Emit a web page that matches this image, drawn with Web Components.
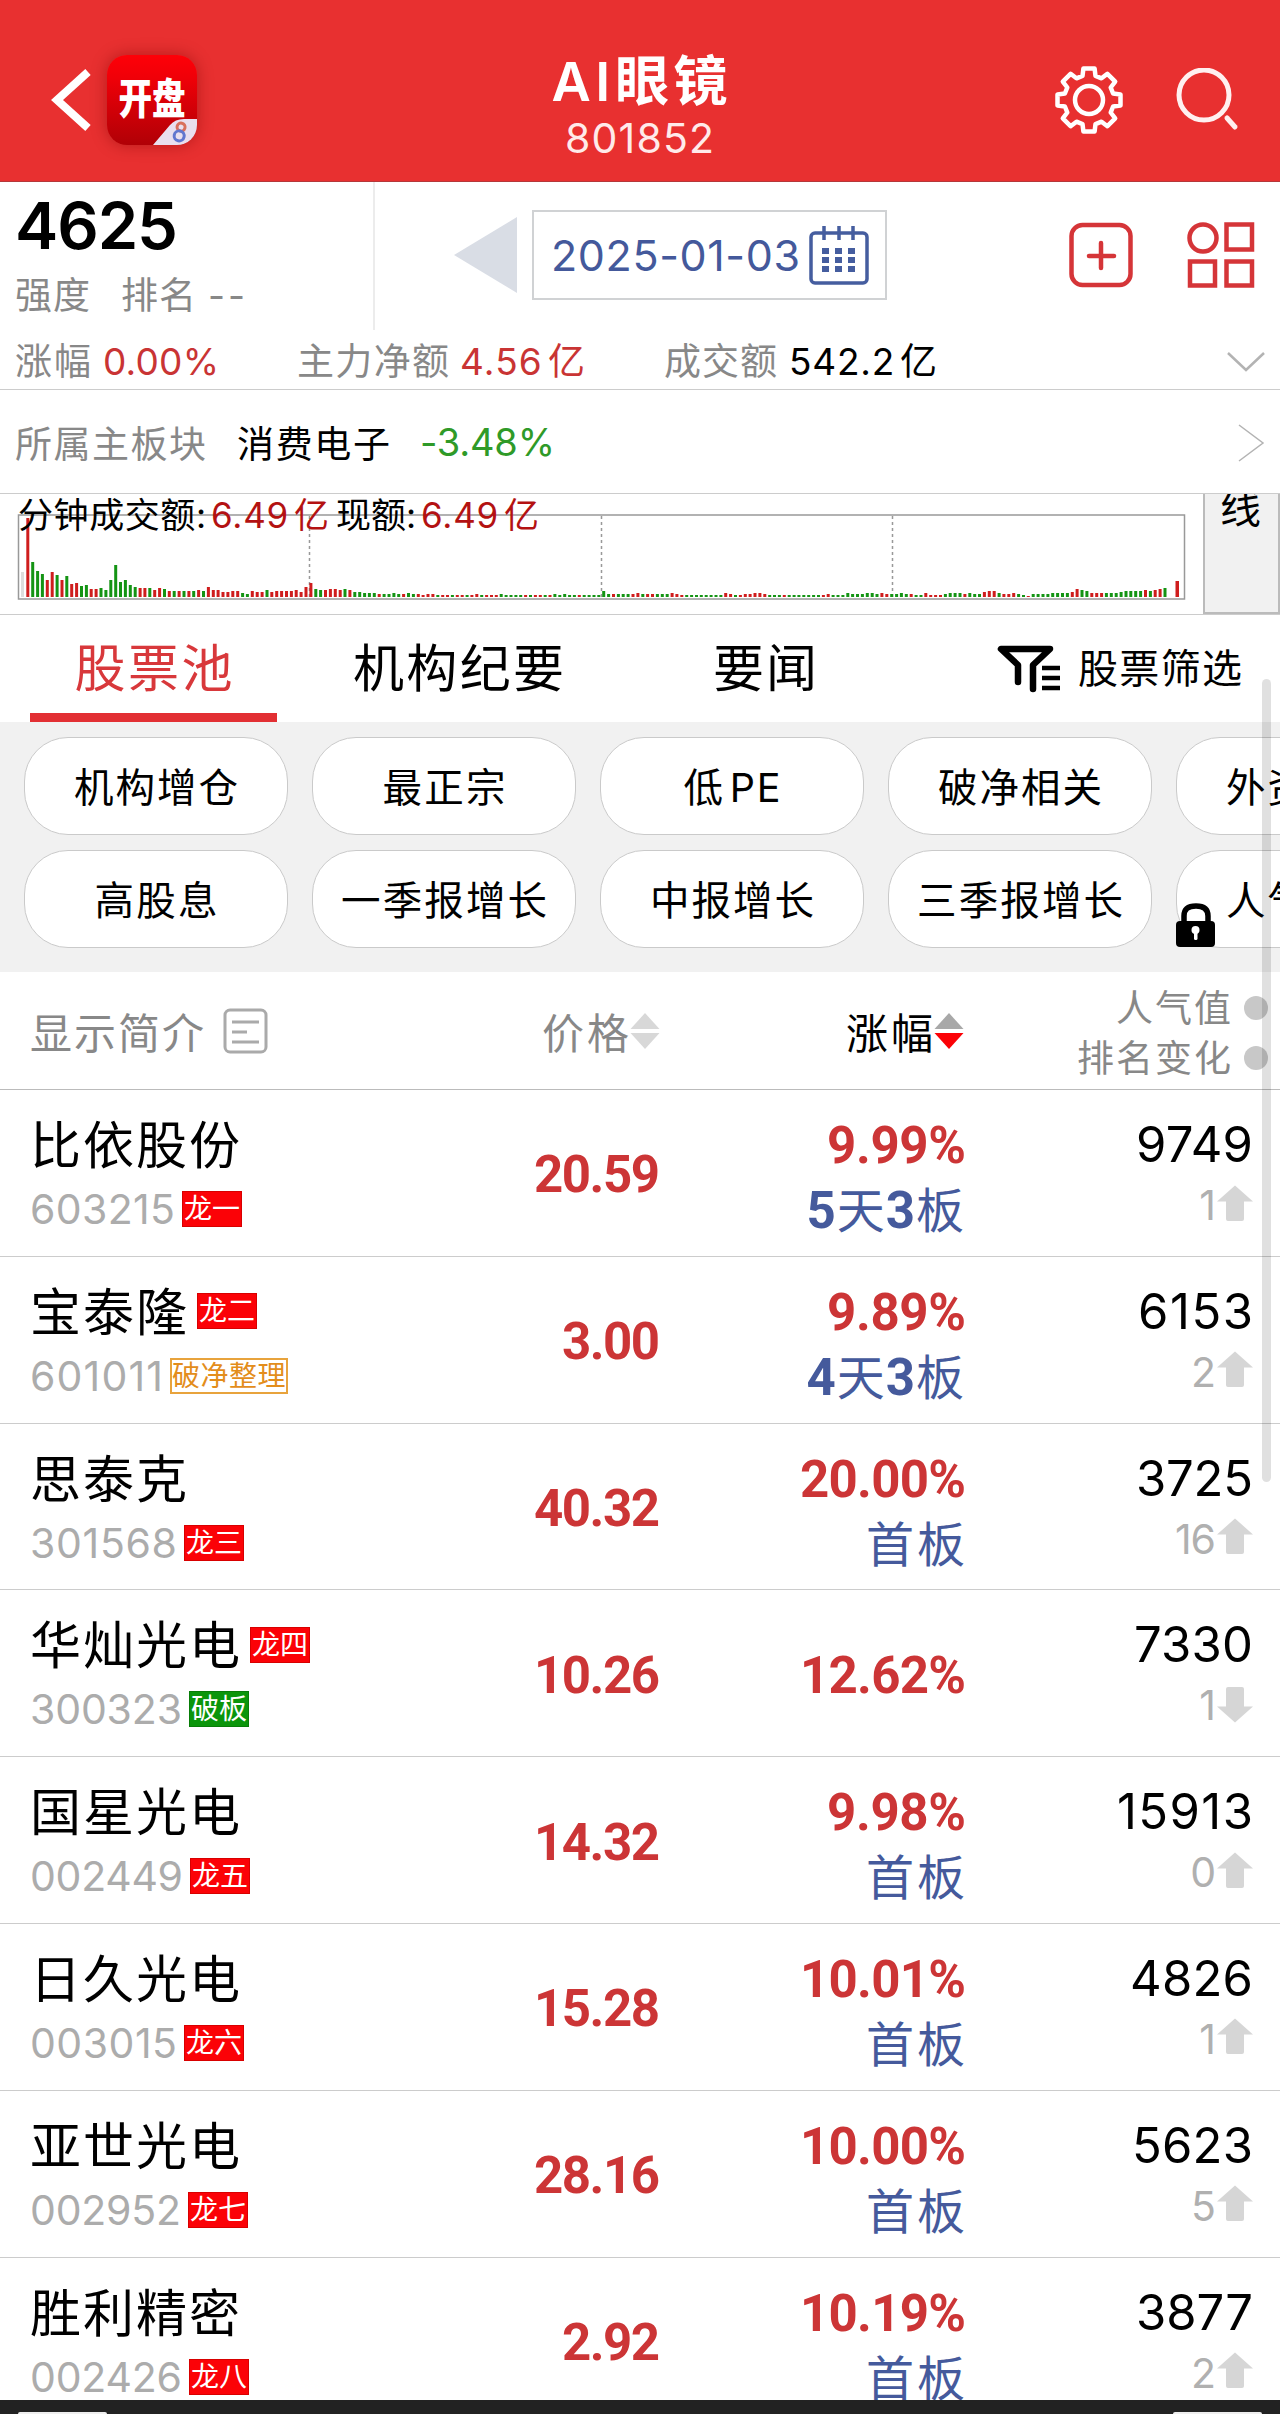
<!DOCTYPE html>
<html lang="zh-CN">
<head>
<meta charset="UTF-8">
<title>AI眼镜 801852</title>
<style>
  body {
    margin: 0;
    width: 1280px;
    height: 2414px;
    overflow: hidden;
    background: #fff;
    color: #000;
    font-family: Inter, "Noto Sans CJK SC", sans-serif;
  }
</style>
</head>
<body>
<stock-page></stock-page>

<script>
// Text run that is spread over a fixed width with letter-spacing
class FitText extends HTMLElement {
  constructor() {
    super();
    this.attachShadow({ mode: "open" });
  }

  connectedCallback() {
    this.shadowRoot.innerHTML = `
      <style>
        :host { display: inline-block; white-space: nowrap; flex: none; }
        span { display: inline-block; vertical-align: top; }
        ::slotted(i) { font-style: normal; margin-left: 5px; }
      </style>
      <span><slot></slot></span>
    `;
    const width = Number(this.getAttribute("w"));
    const span = this.shadowRoot.querySelector("span");
    const gaps = Math.max(1, this.textContent.length - 1);
    const natural = span.getBoundingClientRect().width;
    span.style.letterSpacing = (width - natural) / gaps + "px";
    this.style.width = width + "px";
  }
}

class AppLogo extends HTMLElement {
  constructor() {
    super();
    this.attachShadow({ mode: "open" });
  }

  connectedCallback() {
    this.shadowRoot.innerHTML = `
      <style>
        :host {
          display: block;
          position: relative;
          width: 90px;
          height: 90px;
          border-radius: 20px;
          overflow: hidden;
          background: linear-gradient(#fe0008, #f00008 25%, #b00006);
        }
        .name {
          width: 90px;
          height: 88px;
          line-height: 88px;
          text-align: center;
          font-weight: 900;
          font-size: 42px;
          color: #fff;
          transform: scaleX(0.8);
          white-space: nowrap;
        }
        svg { position: absolute; right: 0; bottom: 0; }
      </style>
      <div class="name">开盘</div>
      <svg width="44" height="26" viewBox="0 0 44 26">
        <path d="M0 26 L17 6 Q22 0 31 0 H44 V26 Z" fill="#e9dfee"/>
        <g fill="none" stroke-width="3" transform="rotate(12 27 13)">
          <circle cx="27" cy="8" r="4" stroke="#d9705c"/>
          <circle cx="27" cy="17" r="5" stroke="#6277cf"/>
        </g>
      </svg>
    `;
  }
}

class AppHeader extends HTMLElement {
  constructor() {
    super();
    this.attachShadow({ mode: "open" });
  }

  connectedCallback() {
    this.shadowRoot.innerHTML = `
      <style>
        :host {
          display: flex;
          justify-content: space-between;
          box-sizing: border-box;
          height: 182px;
          padding: 55px 41px 0 50px;
          background: #e83030;
          border-bottom: 1px solid #b5383a;
          color: #fff;
        }
        .left, .right { display: flex; align-items: center; height: 90px; width: 240px; }
        .left { gap: 15px; }
        app-logo { box-shadow: 0 0 16px rgba(120, 0, 0, 0.45); }
        .right { justify-content: flex-end; gap: 51px; }
        .title { display: flex; flex-direction: column; align-items: center; margin-right: 10px; }
        h1 { margin: 0; font-size: 54px; font-weight: 600; line-height: 54px; height: 54px; }
        .code { font-size: 41px; line-height: 42px; margin-top: 8px; color: #ffeaea; }
      </style>
      <div class="left">
        <svg width="42" height="64" viewBox="0 0 42 64"><path d="M38 4 L7 32 L38 60" fill="none" stroke="#fff" stroke-width="8"/></svg>
        <app-logo></app-logo>
      </div>
      <div class="title">
        <h1><fit-text w="176">AI眼镜</fit-text></h1>
        <fit-text class="code" w="149">801852</fit-text>
      </div>
      <div class="right">
        <svg width="70" height="70" viewBox="-35 -35 70 70" fill="none" stroke="#fff" stroke-width="4.5" stroke-linejoin="round">
          <path id="gear"/>
          <circle r="14"/>
        </svg>
        <svg width="64" height="64" viewBox="0 0 64 64" fill="none" stroke="#fff0f0" stroke-width="5" stroke-linecap="round">
          <circle cx="29" cy="27" r="25"/>
          <path d="M52 50 L60 59"/>
        </svg>
      </div>
    `;
    this.shadowRoot.querySelector("#gear").setAttribute("d", this.gearPath());
  }

  // eight teeth: narrow tip, wider root
  gearPath() {
    const points = [];
    for (let i = 0; i < 8; i++) {
      [[-15, 25], [-10, 32], [10, 32], [15, 25]].forEach(([deg, r]) => {
        const a = (i * 45 + deg - 90) * Math.PI / 180;
        points.push((r * Math.cos(a)).toFixed(1) + " " + (r * Math.sin(a)).toFixed(1));
      });
    }
    return "M" + points.join(" L") + " Z";
  }
}

class BoardSummary extends HTMLElement {
  constructor() {
    super();
    this.attachShadow({ mode: "open" });
  }

  connectedCallback() {
    this.shadowRoot.innerHTML = `
      <style>
        :host { display: block; height: 207px; border-bottom: 1px solid #ccc; color: #888; font-size: 37px; }
        .top { display: flex; height: 148px; }
        .score { box-sizing: border-box; width: 375px; border-right: 2px solid #ececec; padding: 13px 0 0 15px; }
        .value { display: block; font-size: 65px; font-weight: 600; line-height: 62px; color: #000; }
        .rank { display: flex; line-height: 44px; margin-top: 17px; }
        .rank fit-text:nth-child(2) { margin-left: 31px; }
        .rank fit-text:nth-child(3) { margin-left: 12px; }
        .tools { display: flex; flex: 1; align-items: center; height: 90px; padding: 28px 25px 0 79px; }
        .date {
          display: flex;
          align-items: center;
          box-sizing: border-box;
          width: 355px;
          height: 90px;
          margin: 0 182px 0 15px;
          padding-left: 17px;
          border: 2px solid #d0d2d4;
          color: #44599b;
          font-size: 43px;
        }
        .date svg { margin-left: 9px; }
        .stats { display: flex; align-items: center; height: 59px; line-height: 46px; padding: 4px 15px 0 15px; box-sizing: border-box; }
        .red { color: #c93434; }
        .black { color: #000; }
      </style>
      <div class="top">
        <div class="score">
          <fit-text class="value" w="163">4625</fit-text>
          <div class="rank"><fit-text w="75">强度</fit-text><fit-text w="75">排名</fit-text><fit-text w="37">--</fit-text></div>
        </div>
        <div class="tools">
          <svg width="63" height="76" viewBox="0 0 63 76"><path d="M0 38 L63 0 V76 Z" fill="#d9dde5"/></svg>
          <div class="date">
            <fit-text w="249">2025-01-03</fit-text>
            <svg width="60" height="60" viewBox="0 0 60 60" fill="none" stroke="#455d9f" stroke-width="3.5">
              <rect x="2" y="8" width="56" height="50" rx="4"/>
              <path d="M15 1 V15 M30 1 V15 M44 1 V15"/>
              <path d="M13 26 H46 M13 35 H46 M13 44 H46" stroke-width="6" stroke-dasharray="7 6"/>
            </svg>
          </div>
          <svg width="64" height="66" viewBox="0 0 64 66" fill="none" stroke="#d53538" stroke-width="4.5">
            <rect x="2.5" y="3" width="59" height="60" rx="11"/>
            <path d="M32 21 V46 M20 34 H45" stroke-linecap="round"/>
          </svg>
          <svg style="margin-left:54px" width="68" height="66" viewBox="0 0 68 66" fill="none" stroke="#d53538" stroke-width="4.5">
            <circle cx="16" cy="16" r="13.5"/>
            <rect x="39.5" y="2.5" width="25.5" height="25"/>
            <rect x="3" y="39.5" width="25" height="24"/>
            <rect x="39.5" y="39.5" width="25.5" height="24"/>
          </svg>
        </div>
      </div>
      <div class="stats">
        <fit-text w="76">涨幅</fit-text>
        <fit-text class="red" w="116" style="margin-left:12px">0.00%</fit-text>
        <fit-text w="152" style="margin-left:78px">主力净额</fit-text>
        <fit-text class="red" w="125" style="margin-left:11px">4.56<i>亿</i></fit-text>
        <fit-text w="113" style="margin-left:79px">成交额</fit-text>
        <fit-text class="black" w="148" style="margin-left:12px">542.2<i>亿</i></fit-text>
        <svg style="margin-left:auto" width="38" height="22" viewBox="0 0 38 22"><path d="M1 2 L19 19 L37 2" fill="none" stroke="#b3b3b3" stroke-width="2.5"/></svg>
      </div>
    `;
  }
}

class SectorRow extends HTMLElement {
  constructor() {
    super();
    this.attachShadow({ mode: "open" });
  }

  connectedCallback() {
    this.shadowRoot.innerHTML = `
      <style>
        :host {
          display: flex;
          align-items: center;
          height: 103px;
          padding: 0 15px 0 15px;
          border-bottom: 1px solid #ccc;
          font-size: 37px;
        }
        .label { color: #888; }
        .name { margin-left: 31px; }
        .rate { margin-left: 30px; color: #2f9a28; font-size: 38px; }
        svg { margin-left: auto; margin-top: 2px; }
      </style>
      <fit-text class="label" w="191">所属主板块</fit-text>
      <fit-text class="name" w="153">消费电子</fit-text>
      <fit-text class="rate" w="135">-3.48%</fit-text>
      <svg width="27" height="38" viewBox="0 0 27 38"><path d="M1 1 L25 19 L1 37" fill="none" stroke="#b3b3b3" stroke-width="1.5"/></svg>
    `;
  }
}

const VOLUMES = `
  r79 g35 g26 g23 r17 r25 g22 r17 g21 r13 r14 g11 g12 r8x2 g9 g7 g17 g32 g15 g17 g12 g10 r9x2 g9 r7 r9 g8
  r6 g6 r6 g6 r6 g6 r7 g6 r10 r7x2 r5x2 r6x2 g4 g3 r6 r5x2 g7 r5 r6x4 r7 r5 r10 r14 g8 g7 r7 r8x2 r7 g8 r7
  g5x2 g4x3 r3 g3x2 g4 g3 r3 g4 g3 r3 r2 r3x2 g2 r2x2 g2 r2x2 g2 r2 r3 g2 r2x3 g3 g2x4 r2 g2 r2x2 g2 r2 g3
  g2 g3 g2x2 r2 g2x4 g6 g3 r3 g3 g3 g3 r3 r4 g3 r3x2 g3x3 r4 r3 r2 g2x8 r4 r3 g2 r2 r3x2 r4x2 r3 g2x3 r2
  g2x7 r2 r3 g2x3 g4 g3x3 g4x2 g3 r4 r3 g3x2 g4 g3 r3 g2x2 r4 r2x3 g3 g4x3 r3 g4 g3x2 r5 r6x2 g4 r3x2 r4
  g3 g2 r1 g3x4 g4x4 r5 r8 g7 g6 r4x3 g4x3 g5 g6x4 r7 g6 r7 r8 g9`;

class VolumeChart extends HTMLElement {
  constructor() {
    super();
    this.attachShadow({ mode: "open" });
  }

  connectedCallback() {
    this.shadowRoot.innerHTML = `
      <style>
        :host { display: flex; justify-content: space-between; height: 120px; border-bottom: 1px solid #ccc; }
        .chart { position: relative; width: 1190px; }
        .chart svg { display: block; }
        .legend {
          position: absolute;
          left: 18px;
          top: 1px;
          display: flex;
          font-size: 35px;
          line-height: 41px;
        }
        .red { color: #b31212; margin: 0 7px 0 5px; }
        .period {
          box-sizing: border-box;
          width: 77px;
          overflow: hidden;
          background: #f1f1f1;
          border: 2px solid #bbb;
          border-top: 0;
          text-align: center;
          font-size: 41px;
          line-height: 48px;
        }
        .period span { display: block; margin: -10px 0 0 -2px; }
      </style>
      <div class="chart">
        <svg width="1190" height="120" viewBox="0 0 1190 120">
          <g fill="none" stroke="#999">
            <rect x="18.5" y="21" width="1166" height="84" stroke-width="1.5"/>
            <path d="M309.5 22 V104 M601.5 22 V104 M892.5 22 V104" stroke-width="1.5" stroke-dasharray="3 3"/>
          </g>
          <rect x="21" y="78" width="3" height="25" fill="#ddd"/>
          ${this.bars()}
          <rect x="1175.5" y="87" width="3.5" height="16" fill="#cf1d1d"/>
        </svg>
        <div class="legend">
          <fit-text w="188">分钟成交额:</fit-text>
          <fit-text class="red" w="118">6.49<i>亿</i></fit-text>
          <fit-text w="80">现额:</fit-text>
          <fit-text class="red" w="118">6.49<i>亿</i></fit-text>
        </div>
      </div>
      <div class="period"><span>线</span></div>
    `;
  }

  bars() {
    const list = [];
    for (const [, color, size, count] of VOLUMES.matchAll(/([rg])(\d+)(?:x(\d+))?/g)) {
      for (let i = 0; i < Number(count || 1); i++) list.push([color, Number(size)]);
    }
    const step = (1165 - 27.8) / (list.length - 1);
    return list.map(([color, size], i) => {
      const x = (27.8 + i * step - 1.5).toFixed(1);
      return `<rect x="${x}" y="${103 - size}" width="3" height="${size}" fill="${color === "r" ? "#cf1d1d" : "#149414"}"/>`;
    }).join("");
  }
}

class TabBar extends HTMLElement {
  constructor() {
    super();
    this.attachShadow({ mode: "open" });
  }

  connectedCallback() {
    this.shadowRoot.innerHTML = `
      <style>
        :host { display: flex; align-items: stretch; height: 107px; padding-left: 30px; font-size: 51px; line-height: 107px; }
        .tab { text-align: center; box-sizing: border-box; height: 107px; line-height: 107px; }
        .active { width: 247px; color: #d8383b; border-bottom: 9px solid #e22f33; }
        .filter { display: flex; align-items: center; font-size: 40px; margin-left: 180px; }
        .filter fit-text { margin-left: 17px; }
      </style>
      <div class="tab active"><fit-text w="158">股票池</fit-text></div>
      <fit-text class="tab" style="margin-left:76px" w="211">机构纪要</fit-text>
      <fit-text class="tab" style="margin-left:149px" w="104">要闻</fit-text>
      <div class="filter">
        <svg width="64" height="48" viewBox="0 0 64 48" fill="none" stroke="#000" stroke-width="6.5" stroke-linecap="round" stroke-linejoin="round">
          <path d="M21 37 V20 L4 4 H53 L36 20 V44"/>
          <path d="M45 23 H63 M45 33 H63 M45 43 H63" stroke-width="4.5" stroke-linecap="butt"/>
        </svg>
        <fit-text w="164">股票筛选</fit-text>
      </div>
    `;
  }
}

class FilterChip extends HTMLElement {
  constructor() {
    super();
    this.attachShadow({ mode: "open" });
  }

  connectedCallback() {
    const lock = this.hasAttribute("locked") ? `
      <svg width="40" height="45" viewBox="0 0 40 45">
        <path d="M8 20 V13 Q8 3 20 3 Q32 3 32 13 V20" fill="none" stroke="#000" stroke-width="5.5"/>
        <rect y="18" width="39" height="26" rx="4"/>
        <circle cx="19.5" cy="27" r="4" fill="#fff"/>
        <rect x="18" y="28" width="3.5" height="9" rx="1.5" fill="#fff"/>
      </svg>` : "";
    this.shadowRoot.innerHTML = `
      <style>
        :host {
          display: flex;
          justify-content: center;
          align-items: center;
          position: relative;
          box-sizing: border-box;
          width: 264px;
          height: 98px;
          padding-bottom: 4px;
          border: 1.5px solid #cacaca;
          border-radius: 44px;
          background: #fff;
          font-size: 39.5px;
        }
        svg { position: absolute; left: -1px; bottom: -1px; }
      </style>
      <slot></slot>${lock}
    `;
  }
}

class FilterChips extends HTMLElement {
  constructor() {
    super();
    this.attachShadow({ mode: "open" });
  }

  connectedCallback() {
    this.shadowRoot.innerHTML = `
      <style>
        :host {
          display: grid;
          grid-template-columns: repeat(5, 264px);
          gap: 15px 24px;
          align-content: start;
          box-sizing: border-box;
          height: 250px;
          padding: 15px 0 0 24px;
          background: #f1f1f1;
          overflow: hidden;
        }
      </style>
      <filter-chip><fit-text w="164">机构增仓</fit-text></filter-chip>
      <filter-chip><fit-text w="123">最正宗</fit-text></filter-chip>
      <filter-chip><fit-text w="97">低<i>PE</i></fit-text></filter-chip>
      <filter-chip><fit-text w="164">破净相关</fit-text></filter-chip>
      <filter-chip><fit-text w="164">外资增仓</fit-text></filter-chip>
      <filter-chip><fit-text w="123">高股息</fit-text></filter-chip>
      <filter-chip><fit-text w="206">一季报增长</fit-text></filter-chip>
      <filter-chip><fit-text w="164">中报增长</fit-text></filter-chip>
      <filter-chip><fit-text w="206">三季报增长</fit-text></filter-chip>
      <filter-chip locked><fit-text w="164">人气排名</fit-text></filter-chip>
    `;
  }
}

class StockHead extends HTMLElement {
  constructor() {
    super();
    this.attachShadow({ mode: "open" });
  }

  connectedCallback() {
    this.shadowRoot.innerHTML = `
      <style>
        :host {
          display: grid;
          grid-template-columns: 268px 392px 304px 304px;
          align-items: center;
          height: 117px;
          border-bottom: 1.5px solid #bbb;
          color: #888;
          font-size: 42px;
        }
        .cell { display: flex; align-items: center; justify-content: flex-end; }
        .sort { margin-left: 1px; margin-top: 1px; }
        .dark { color: #000; }
        .intro svg { margin-left: 19px; }
        .rank { display: grid; gap: 5px; font-size: 37px; line-height: 45px; padding-top: 5px; }
        .rank div { display: flex; align-items: center; justify-content: flex-end; gap: 13px; }
        i { width: 24px; height: 24px; border-radius: 50%; background: #c8c8c8; }
      </style>
      <div class="cell intro">
        <fit-text w="174">显示简介</fit-text>
        <svg width="45" height="46" viewBox="0 0 45 46" fill="none" stroke="#aaa" stroke-width="3">
          <rect x="2" y="2" width="41" height="42" rx="5"/>
          <path d="M9 14 H36 M9 24 H24 M9 34 H36"/>
        </svg>
      </div>
      <div class="cell"><fit-text w="87">价格</fit-text>${this.sortIcon("#d8d8d8", "#d8d8d8")}</div>
      <div class="cell dark"><fit-text w="87">涨幅</fit-text>${this.sortIcon("#a8a8a8", "#fb0207")}</div>
      <div class="rank">
        <div><fit-text w="115">人气值</fit-text><i></i></div>
        <div><fit-text w="154">排名变化</fit-text><i></i></div>
      </div>
    `;
  }

  sortIcon(up, down) {
    return `<svg class="sort" width="30" height="36" viewBox="0 0 30 36">
      <path d="M15 0 L29.5 16 H0.5 Z" fill="${up}"/>
      <path d="M15 36 L29.5 20 H0.5 Z" fill="${down}"/>
    </svg>`;
  }
}

class StockTag extends HTMLElement {
  constructor() {
    super();
    this.attachShadow({ mode: "open" });
  }

  connectedCallback() {
    this.shadowRoot.innerHTML = `
      <style>
        :host {
          display: block;
          box-sizing: border-box;
          flex: none;
          height: 36px;
          padding: 0 1px;
          border: 1px solid #d80000;
          background: #fb0207;
          color: #fff;
          font-size: 28px;
          line-height: 35px;
        }
        :host([kind="green"]) { background: #0b950b; border-color: #087d08; }
        :host([kind="line"]) {
          background: #fff;
          border: 2px solid #e8a33c;
          color: #e38d1b;
          line-height: 33px;
          letter-spacing: 0.5px;
          padding: 0;
        }
      </style>
      <slot></slot>
    `;
  }
}

class StockRow extends HTMLElement {
  constructor() {
    super();
    this.attachShadow({ mode: "open" });
  }

  set data(row) {
    const nameTag = row.nameTag ? `<stock-tag>${row.nameTag}</stock-tag>` : "";
    const board = row.board ? `<div class="board">${this.boardText(row.board)}</div>` : "";
    this.shadowRoot.innerHTML = `
      <style>
        :host {
          display: grid;
          grid-template-columns: 400px 260px 306px 287px;
          box-sizing: border-box;
          height: 166.8px;
          border-bottom: 1.5px solid #ccc;
        }
        .name, .code { display: flex; align-items: center; padding-left: 30px; }
        .name { margin-top: 23px; height: 58px; gap: 10px; font-size: 51px; }
        .name stock-tag { margin-top: 5px; }
        .code { margin-top: 19px; height: 38px; gap: 7px; font-size: 41px; color: #acacac; }
        .price, .change { display: flex; flex-direction: column; align-items: flex-end; justify-content: center; padding-top: 5px; }
        .price, .rate { font-family: Roboto, sans-serif; font-weight: 700; font-size: 51px; line-height: 56px; color: #cc3536; }
        .change.two { justify-content: flex-start; padding-top: 28px; }
        .board { display: flex; align-items: center; margin: 9px 1px 0 0; height: 56px; color: #455a9c; font-size: 48px; line-height: 56px; }
        .board b { font-family: Roboto, sans-serif; font-size: 51px; }
        .board fit-text { margin-left: 1px; }
        .hot { display: flex; flex-direction: column; align-items: flex-end; padding-top: 28px; }
        .hot .value { font-size: 49px; line-height: 54px; }
        .move { display: flex; align-items: center; margin-top: 14px; height: 38px; font-size: 41px; line-height: 38px; letter-spacing: -1px; color: #b0b0b0; gap: 2px; }
        .move svg { margin-top: -5px; }
        .move svg.down { transform: scaleY(-1); margin-top: -1px; }
      </style>
      <div>
        <div class="name"><fit-text w="${row.name.length * 53 - 2}">${row.name}</fit-text>${nameTag}</div>
        <div class="code"><fit-text w="${row.codeWidth}">${row.code}</fit-text><stock-tag kind="${row.kind || "red"}">${row.tag}</stock-tag></div>
      </div>
      <div class="price"><fit-text w="${row.price.length === 5 ? 126 : 98}">${row.price}</fit-text></div>
      <div class="change ${row.board ? "two" : ""}">
        <fit-text class="rate" w="${row.rate.length === 6 ? 166 : 139}">${row.rate}</fit-text>
        ${board}
      </div>
      <div class="hot">
        <fit-text class="value" w="${row.hotWidth}">${row.hot}</fit-text>
        <div class="move">${row.move}<svg class="${row.down ? "down" : ""}" width="36" height="36" viewBox="0 0 36 36"><path d="M18 0.5 L36 16.5 H27 V34 Q27 36 25 36 H11 Q9 36 9 34 V16.5 H0 Z" fill="#d6d6d6"/></svg></div>
      </div>
    `;
  }

  // digits of the board count are bold, the characters are regular
  boardText(text) {
    return text.replace(/\d|\D+/g, (part) =>
      /\d/.test(part) ? `<b>${part}</b>` : `<fit-text w="${part.length * 50 - 1}">${part}</fit-text>`);
  }
}

const STOCKS = [
  { name: "比依股份", code: "603215", codeWidth: 145, tag: "龙一", price: "20.59", rate: "9.99%", board: "5天3板", hot: "9749", hotWidth: 117, move: "1" },
  { name: "宝泰隆", nameTag: "龙二", code: "601011", codeWidth: 133, tag: "破净整理", kind: "line", price: "3.00", rate: "9.89%", board: "4天3板", hot: "6153", hotWidth: 115, move: "2" },
  { name: "思泰克", code: "301568", codeWidth: 147, tag: "龙三", price: "40.32", rate: "20.00%", board: "首板", hot: "3725", hotWidth: 117, move: "16" },
  { name: "华灿光电", nameTag: "龙四", code: "300323", codeWidth: 152, tag: "破板", kind: "green", price: "10.26", rate: "12.62%", hot: "7330", hotWidth: 119, move: "1", down: true },
  { name: "国星光电", code: "002449", codeWidth: 153, tag: "龙五", price: "14.32", rate: "9.98%", board: "首板", hot: "15913", hotWidth: 136, move: "0" },
  { name: "日久光电", code: "003015", codeWidth: 147, tag: "龙六", price: "15.28", rate: "10.01%", board: "首板", hot: "4826", hotWidth: 123, move: "1" },
  { name: "亚世光电", code: "002952", codeWidth: 151, tag: "龙七", price: "28.16", rate: "10.00%", board: "首板", hot: "5623", hotWidth: 121, move: "5" },
  { name: "胜利精密", code: "002426", codeWidth: 152, tag: "龙八", price: "2.92", rate: "10.19%", board: "首板", hot: "3877", hotWidth: 117, move: "2" },
];

class StockPage extends HTMLElement {
  constructor() {
    super();
    this.attachShadow({ mode: "open" });
  }

  connectedCallback() {
    this.shadowRoot.innerHTML = `
      <style>
        :host { display: flex; flex-direction: column; position: relative; width: 1280px; height: 2414px; overflow: hidden; }
        .list { flex: 1; min-height: 0; overflow: hidden; }
        .scrollbar {
          position: absolute;
          left: 1262px;
          top: 679px;
          width: 9px;
          height: 803px;
          border-radius: 5px;
          background: rgba(0, 0, 0, 0.12);
        }
        footer { display: flex; justify-content: space-between; align-items: flex-end; height: 14px; padding: 0 18px; background: #222; }
        footer i { width: 89px; height: 2px; border-radius: 3px 3px 0 0; background: #eee; }
      </style>
      <app-header></app-header>
      <board-summary></board-summary>
      <sector-row></sector-row>
      <volume-chart></volume-chart>
      <tab-bar></tab-bar>
      <filter-chips></filter-chips>
      <stock-head></stock-head>
      <div class="list"></div>
      <footer><i></i><i></i></footer>
      <div class="scrollbar"></div>
    `;
    const list = this.shadowRoot.querySelector(".list");
    STOCKS.forEach((stock) => {
      const row = document.createElement("stock-row");
      list.appendChild(row);
      row.data = stock;
    });
  }
}

customElements.define("fit-text", FitText);
customElements.define("app-logo", AppLogo);
customElements.define("app-header", AppHeader);
customElements.define("board-summary", BoardSummary);
customElements.define("sector-row", SectorRow);
customElements.define("volume-chart", VolumeChart);
customElements.define("tab-bar", TabBar);
customElements.define("filter-chip", FilterChip);
customElements.define("filter-chips", FilterChips);
customElements.define("stock-head", StockHead);
customElements.define("stock-tag", StockTag);
customElements.define("stock-row", StockRow);
customElements.define("stock-page", StockPage);
</script>
</body>
</html>
